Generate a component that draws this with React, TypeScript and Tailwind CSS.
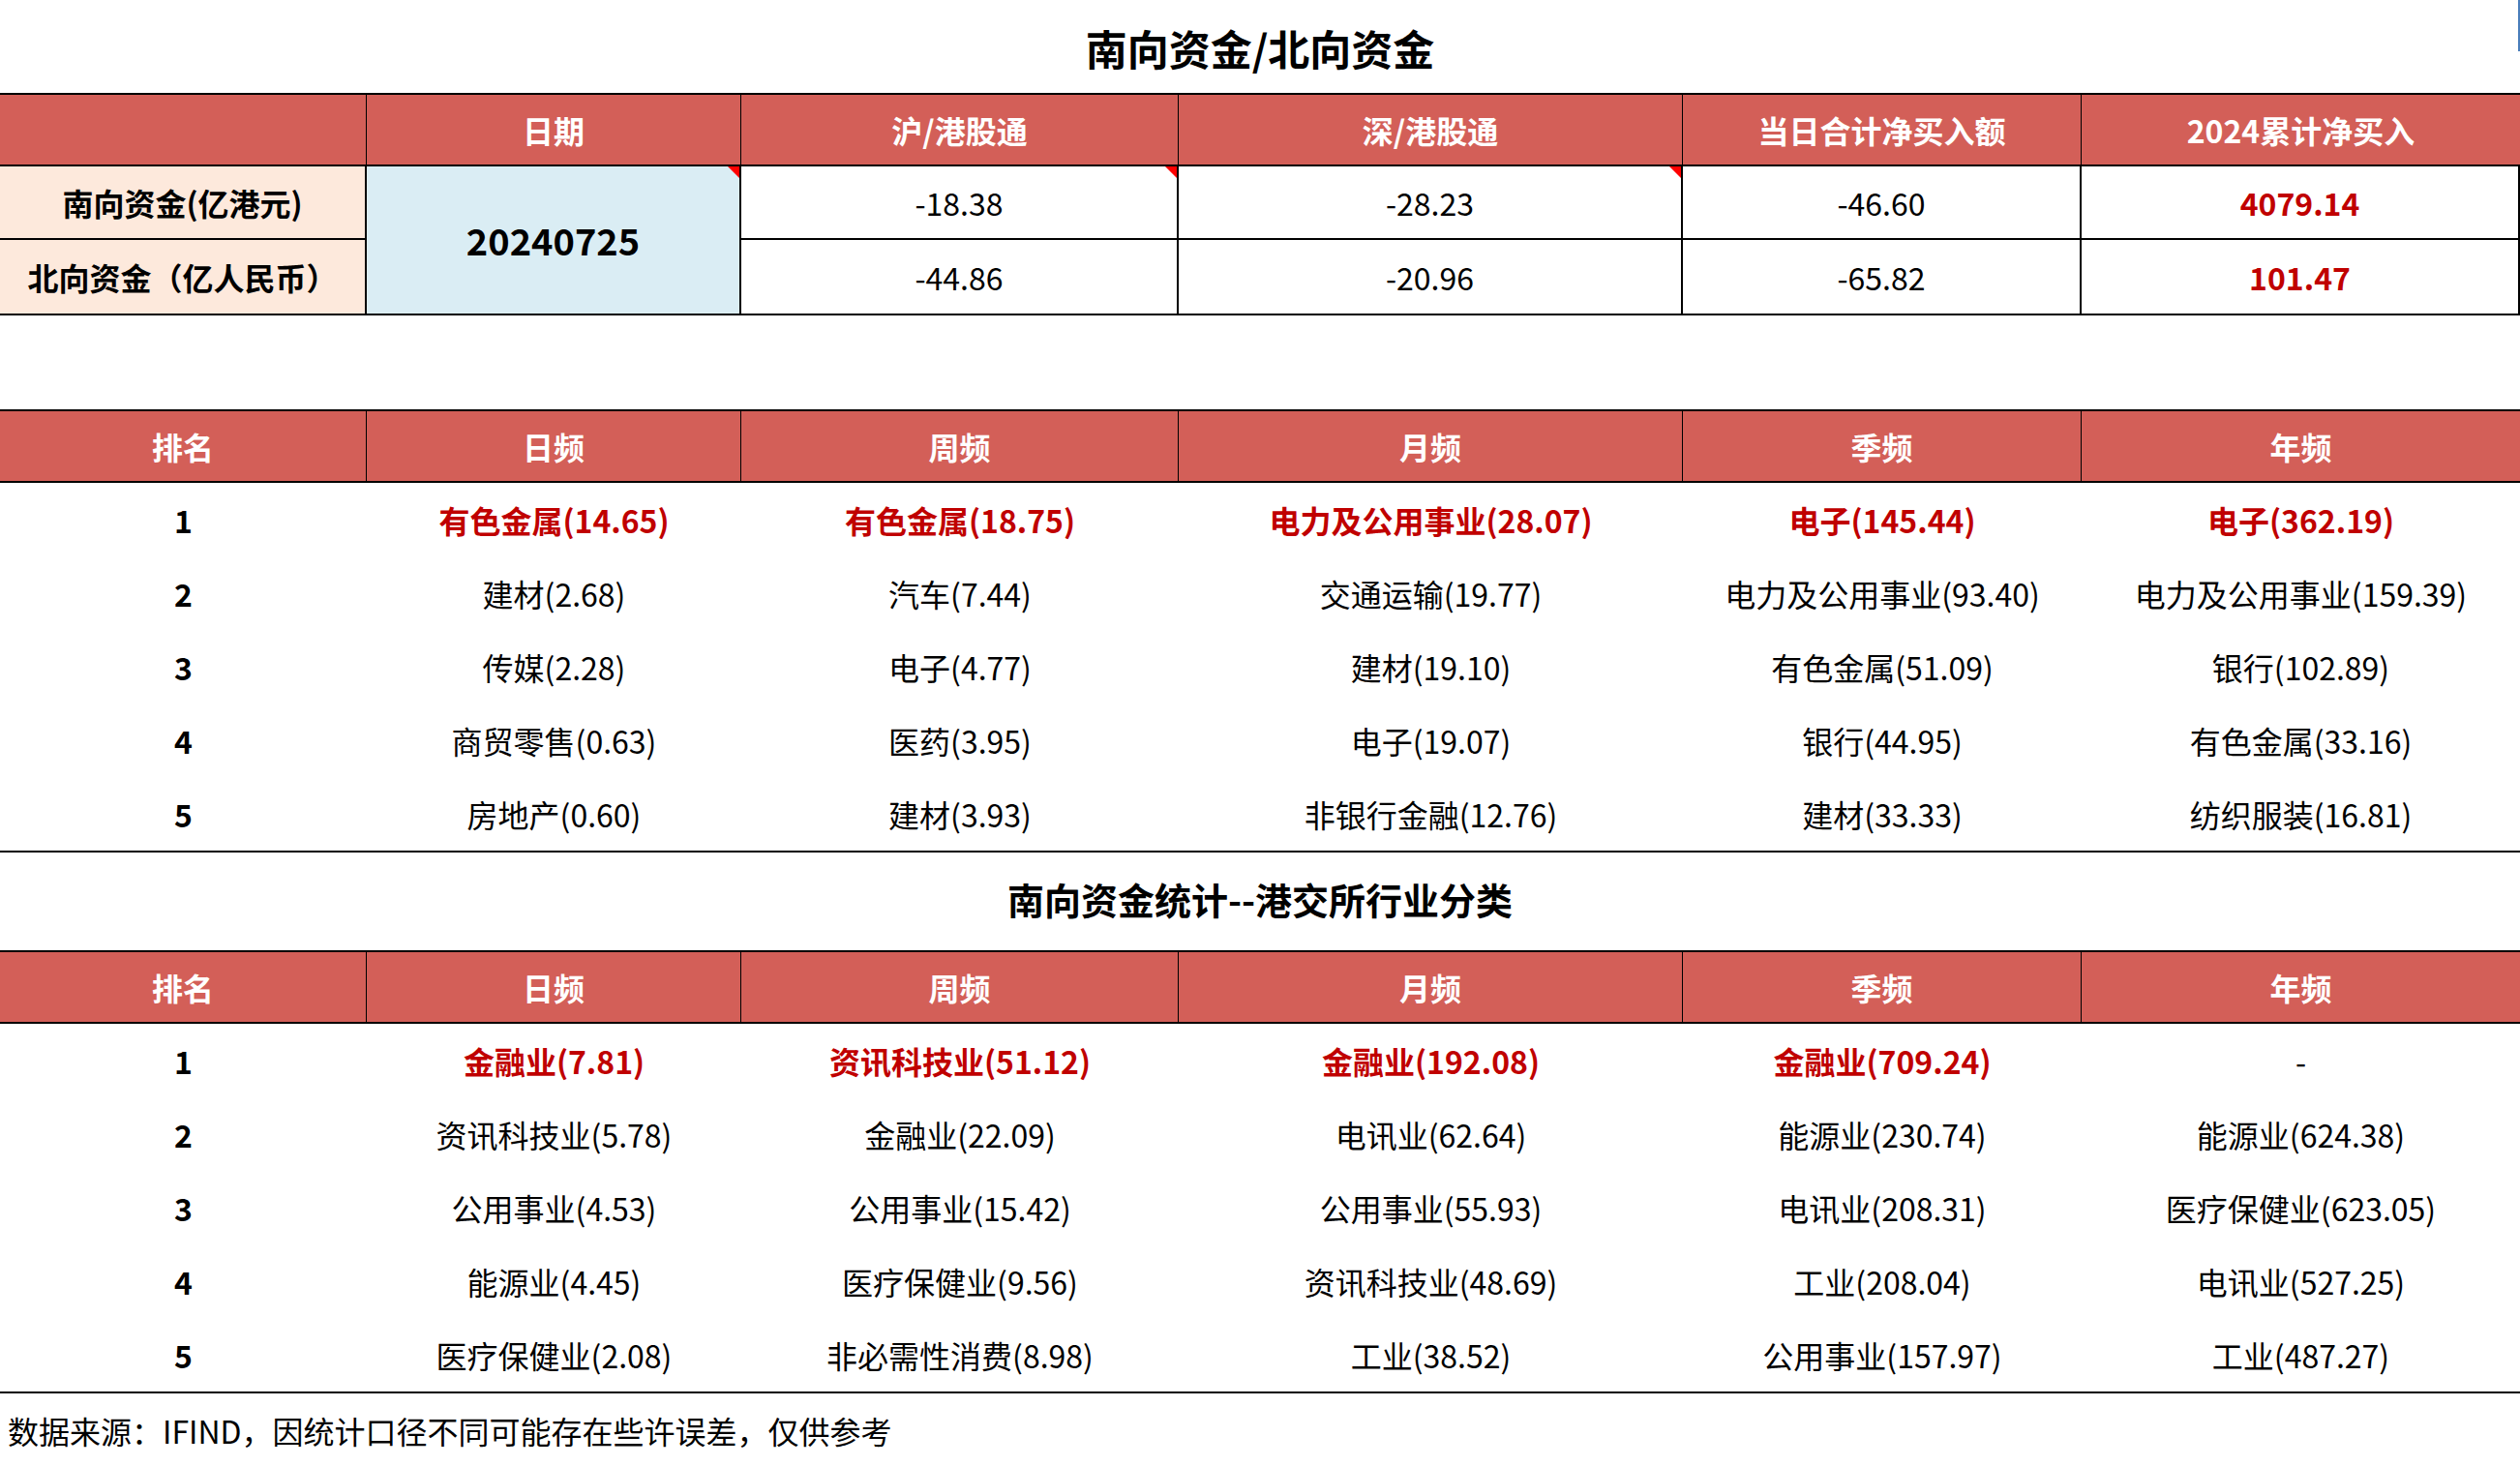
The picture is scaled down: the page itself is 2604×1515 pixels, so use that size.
const cols = "grid grid-cols-[379px_387px_452px_521px_412px_453px]";

type Cell = { t: string; hi?: boolean };

const rank1: Cell[][] = [
  [{ t: "有色金属(14.65)", hi: true }, { t: "有色金属(18.75)", hi: true }, { t: "电力及公用事业(28.07)", hi: true }, { t: "电子(145.44)", hi: true }, { t: "电子(362.19)", hi: true }],
  [{ t: "建材(2.68)" }, { t: "汽车(7.44)" }, { t: "交通运输(19.77)" }, { t: "电力及公用事业(93.40)" }, { t: "电力及公用事业(159.39)" }],
  [{ t: "传媒(2.28)" }, { t: "电子(4.77)" }, { t: "建材(19.10)" }, { t: "有色金属(51.09)" }, { t: "银行(102.89)" }],
  [{ t: "商贸零售(0.63)" }, { t: "医药(3.95)" }, { t: "电子(19.07)" }, { t: "银行(44.95)" }, { t: "有色金属(33.16)" }],
  [{ t: "房地产(0.60)" }, { t: "建材(3.93)" }, { t: "非银行金融(12.76)" }, { t: "建材(33.33)" }, { t: "纺织服装(16.81)" }],
];

const rank2: Cell[][] = [
  [{ t: "金融业(7.81)", hi: true }, { t: "资讯科技业(51.12)", hi: true }, { t: "金融业(192.08)", hi: true }, { t: "金融业(709.24)", hi: true }, { t: "-" }],
  [{ t: "资讯科技业(5.78)" }, { t: "金融业(22.09)" }, { t: "电讯业(62.64)" }, { t: "能源业(230.74)" }, { t: "能源业(624.38)" }],
  [{ t: "公用事业(4.53)" }, { t: "公用事业(15.42)" }, { t: "公用事业(55.93)" }, { t: "电讯业(208.31)" }, { t: "医疗保健业(623.05)" }],
  [{ t: "能源业(4.45)" }, { t: "医疗保健业(9.56)" }, { t: "资讯科技业(48.69)" }, { t: "工业(208.04)" }, { t: "电讯业(527.25)" }],
  [{ t: "医疗保健业(2.08)" }, { t: "非必需性消费(8.98)" }, { t: "工业(38.52)" }, { t: "公用事业(157.97)" }, { t: "工业(487.27)" }],
];

function Header({ labels }: { labels: string[] }) {
  return (
    <div className={`${cols} h-[76px] bg-[#d35f58] border-y-2 border-black`}>
      {labels.map((l, i) => (
        <div
          key={i}
          className={`flex items-center justify-center text-[32px] font-bold text-white ${i < labels.length - 1 ? "border-r border-black" : ""}`}
        >
          {l}
        </div>
      ))}
    </div>
  );
}

function Flag() {
  return <span className="absolute top-0 right-0 h-0 w-0 border-l-[12px] border-l-transparent border-t-[12px] border-t-[#ff0000]" />;
}

function RankTable({ rows }: { rows: Cell[][] }) {
  return (
    <div>
      <Header labels={["排名", "日频", "周频", "月频", "季频", "年频"]} />
      <div className="border-b-2 border-black">
        {rows.map((r, i) => (
          <div key={i} className={`${cols} h-[76px] text-[32px]`}>
            <div className="flex items-center justify-center font-bold">{i + 1}</div>
            {r.map((c, j) => (
              <div
                key={j}
                className={`flex items-center justify-center whitespace-nowrap ${c.hi ? "font-bold text-[#c00000]" : ""}`}
              >
                {c.t}
              </div>
            ))}
          </div>
        ))}
      </div>
    </div>
  );
}

export default function App() {
  return (
    <div className="w-[2604px] h-[1515px] bg-white text-black font-['Noto_Sans_CJK_SC',sans-serif] leading-none overflow-hidden">
      {/* title */}
      <div className="relative h-[96px] flex items-center justify-center pt-[2px]">
        <h1 className="text-[43px] font-bold">南向资金/北向资金</h1>
        <span className="absolute right-0 top-0 h-[53px] w-[2px] bg-[#4a7ebb]" />
      </div>

      {/* summary table */}
      <div>
        <Header labels={["", "日期", "沪/港股通", "深/港股通", "当日合计净买入额", "2024累计净买入"]} />
        <div className={`${cols} grid-rows-[76px_76px] border-b-2 border-black text-[32px]`}>
          <div className="flex items-center justify-center bg-[#fde9dc] font-bold border-r-2 border-b-2 border-black">
            南向资金(亿港元)
          </div>
          <div className="relative row-span-2 flex items-center justify-center bg-[#daedf4] text-[38px] font-bold border-r-2 border-black">
            20240725
            <Flag />
          </div>
          <div className="relative flex items-center justify-center border-r-2 border-b-2 border-black">
            -18.38
            <Flag />
          </div>
          <div className="relative flex items-center justify-center border-r-2 border-b-2 border-black">
            -28.23
            <Flag />
          </div>
          <div className="flex items-center justify-center border-r-2 border-b-2 border-black">-46.60</div>
          <div className="flex items-center justify-center border-r-2 border-b-2 border-black font-bold text-[#c00000]">
            4079.14
          </div>

          <div className="flex items-center justify-center bg-[#fde9dc] font-bold border-r-2 border-black">
            北向资金（亿人民币）
          </div>
          <div className="flex items-center justify-center border-r-2 border-black">-44.86</div>
          <div className="flex items-center justify-center border-r-2 border-black">-20.96</div>
          <div className="flex items-center justify-center border-r-2 border-black">-65.82</div>
          <div className="flex items-center justify-center border-r-2 border-black font-bold text-[#c00000]">101.47</div>
        </div>
      </div>

      <div className="h-[97px]" />

      <RankTable rows={rank1} />

      <div className="h-[101px] flex items-center justify-center pb-[6px]">
        <h2 className="text-[38px] font-bold">南向资金统计--港交所行业分类</h2>
      </div>

      <RankTable rows={rank2} />

      <div className="h-[79px] flex items-center pl-[8px] pb-[4px]">
        <p className="text-[32px]">数据来源：IFIND，因统计口径不同可能存在些许误差，仅供参考</p>
      </div>
    </div>
  );
}
